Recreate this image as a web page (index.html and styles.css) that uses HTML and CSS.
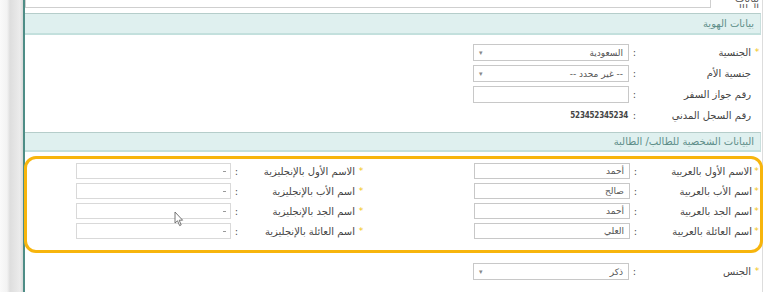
FILE: index.html
```html
<!DOCTYPE html>
<html lang="ar">
<head>
<meta charset="utf-8">
<link rel="stylesheet" href="styles.css">
</head>
<body>
<div class="page">
  <div class="rail"></div>
  <div class="main">
    <div class="topbar">
      <div class="top-label">بيانات الطالب</div>
      <div class="top-box"></div>
    </div>

    <div class="section-head">بيانات الهوية</div>

    <div class="section">
      <div class="row">
        <span class="star">*</span><span class="label">الجنسية</span><span class="colon">:</span>
        <div class="field select"><span class="val">السعودية</span><span class="arrow">▾</span></div>
      </div>
      <div class="row">
        <span class="star"></span><span class="label">جنسية الأم</span><span class="colon">:</span>
        <div class="field select"><span class="val">-- غير محدد --</span><span class="arrow">▾</span></div>
      </div>
      <div class="row">
        <span class="star"></span><span class="label">رقم جواز السفر</span><span class="colon">:</span>
        <div class="field"></div>
      </div>
      <div class="row">
        <span class="star"></span><span class="label">رقم السجل المدني</span><span class="colon">:</span>
        <div class="plain">523452345234</div>
      </div>
    </div>

    <div class="section-head head2">البيانات الشخصية للطالب/ الطالبة</div>

    <div class="highlight">
      <div class="col col-ar">
        <div class="row r20">
          <span class="star">*</span><span class="label">الاسم الأول بالعربية</span><span class="colon">:</span>
          <div class="field"><span class="val">أحمد</span></div>
        </div>
        <div class="row r20">
          <span class="star">*</span><span class="label">اسم الأب بالعربية</span><span class="colon">:</span>
          <div class="field"><span class="val">صالح</span></div>
        </div>
        <div class="row r20">
          <span class="star">*</span><span class="label">اسم الجد بالعربية</span><span class="colon">:</span>
          <div class="field"><span class="val">أحمد</span></div>
        </div>
        <div class="row r20">
          <span class="star">*</span><span class="label">اسم العائلة بالعربية</span><span class="colon">:</span>
          <div class="field"><span class="val">العلي</span></div>
        </div>
      </div>
      <div class="col col-en">
        <div class="row r20">
          <span class="star">*</span><span class="label">الاسم الأول بالإنجليزية</span><span class="colon">:</span>
          <div class="field light"><span class="dash"></span></div>
        </div>
        <div class="row r20">
          <span class="star">*</span><span class="label">اسم الأب بالإنجليزية</span><span class="colon">:</span>
          <div class="field light"><span class="dash"></span></div>
        </div>
        <div class="row r20">
          <span class="star">*</span><span class="label">اسم الجد بالإنجليزية</span><span class="colon">:</span>
          <div class="field light"><span class="dash"></span></div>
        </div>
        <div class="row r20">
          <span class="star">*</span><span class="label">اسم العائلة بالإنجليزية</span><span class="colon">:</span>
          <div class="field light"><span class="dash"></span></div>
        </div>
      </div>
    </div>

    <div class="section last">
      <div class="row">
        <span class="star">*</span><span class="label">الجنس</span><span class="colon">:</span>
        <div class="field select"><span class="val">ذكر</span><span class="arrow">▾</span></div>
      </div>
    </div>
  </div>
</div>
<svg class="cursor" width="10" height="16" viewBox="0 0 10 16">
  <path d="M1 1 L1 12 L3.5 9.8 L5.6 14.6 L7.2 13.9 L5.2 9.2 L8.6 9.2 Z" fill="#fff" stroke="#666" stroke-width="0.9" stroke-linejoin="round"/>
</svg>
</body>
</html>
```

FILE: styles.css
```css
html, body {
  margin: 0;
  padding: 0;
  background: #fff;
}
body {
  width: 770px;
  height: 292px;
  overflow: hidden;
  position: relative;
  font-family: "DejaVu Sans", "Noto Sans", sans-serif;
  color: #444;
}
.page {
  display: flex;
  height: 292px;
}
.rail {
  width: 23px;
  flex: none;
  background: linear-gradient(to right, #fafafa 0, #f3f3f3 7px, #dedede 10px, #e6e6e6 16px, #ececec 20px, #d8d8d8 23px);
}
.main {
  width: 737px;
  flex: none;
  border-left: 2px solid #4e8d86;
  border-right: 1px solid #dddddd;
  direction: rtl;
}
.topbar {
  height: 8px;
  overflow: hidden;
  display: flex;
  align-items: flex-end;
}
.top-label {
  width: 48px;
  flex: none;
  font-size: 10px;
  line-height: 10px;
  margin-bottom: -6px;
  padding-right: 3px;
  color: #555;
  text-align: right;
}
.top-box {
  width: 688px;
  height: 20px;
  border: 1px solid #cfcfcf;
  border-top: none;
  box-sizing: border-box;
}
.section-head {
  margin-top: 5px;
  margin-right: 1px;
  height: 22px;
  box-sizing: border-box;
  background: #dff0ef;
  border-top: 1px solid #b5cdca;
  border-bottom: 2px solid #c3e0dd;
  border-right: 1px solid #c9e0de;
  color: #5e8e89;
  font-size: 10px;
  line-height: 19px;
  padding-right: 6px;
}
.head2 {
  margin-top: 0;
  height: 20px;
  line-height: 17px;
}
.section {
  padding: 7px 0 6px 0;
}
.section.last {
  padding: 8px 0 0 0;
}
.row {
  display: flex;
  align-items: center;
  height: 21px;
}
.r20 {
  height: 20px;
}
.star {
  width: 10px;
  flex: none;
  text-align: center;
  color: #f2c40f;
  font-size: 9px;
  line-height: 9px;
}
.label {
  width: 112px;
  flex: none;
  font-size: 10px;
  color: #444;
  white-space: nowrap;
  padding-right: 1px;
  box-sizing: border-box;
}
.colon {
  width: 11px;
  flex: none;
  font-size: 10px;
  text-align: center;
  color: #555;
}
.field {
  width: 156px;
  height: 17px;
  box-sizing: border-box;
  border: 1px solid #c8c8c8;
  background: #fff;
  display: flex;
  align-items: center;
  justify-content: space-between;
  padding: 0 5px;
  font-size: 9px;
  color: #555;
}
.r20 .field {
  height: 16px;
}
.field.light {
  border-color: #d9d9d9;
  justify-content: flex-start;
  padding: 0 4px 0 0;
}
.dash {
  width: 3px;
  height: 1px;
  background: #9a9a9a;
}
.arrow {
  font-size: 7px;
  color: #888;
}
.plain {
  font-family: "Liberation Sans Narrow", "DejaVu Sans Condensed", "Liberation Sans", sans-serif;
  font-size: 8px;
  font-weight: bold;
  letter-spacing: -0.2px;
  color: #444;
  padding-right: 1px;
}
.highlight {
  margin: 4px -1px 0 -1px;
  height: 97px;
  box-sizing: border-box;
  border: 3px solid #f7b50d;
  border-radius: 12px;
  padding: 2px 0 0 0;
  display: flex;
}
.col-ar {
  width: 287px;
  margin-left: 107px;
}
.col-ar .star {
  width: 7px;
}
.col-en {
  width: 290px;
}
.col-en .star {
  width: 10px;
}
.col-en .label {
  width: 114px;
}
.col-en .field {
  width: 155px;
}
.cursor {
  position: absolute;
  left: 174px;
  top: 211px;
}
```
